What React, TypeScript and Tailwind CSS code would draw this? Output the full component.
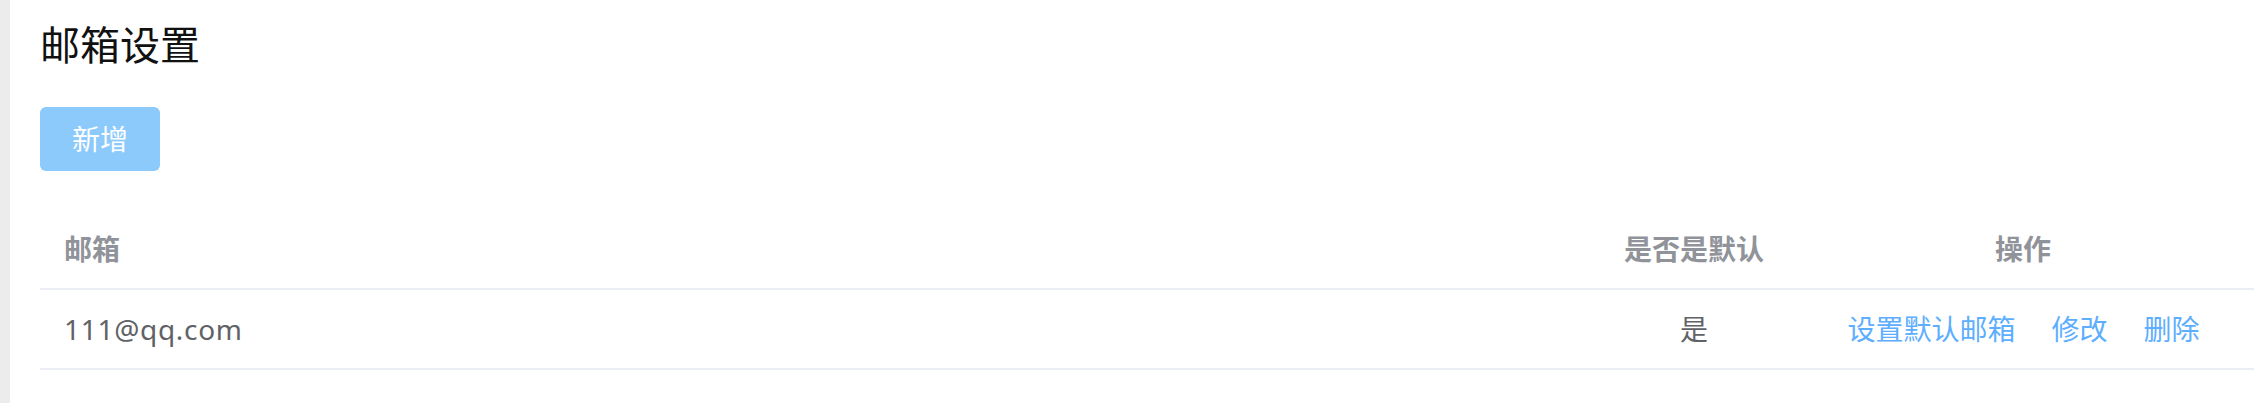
import React from 'react';

interface MailRow {
  email: string;
  isDefault: boolean;
}

const rows: MailRow[] = [{ email: '111@qq.com', isDefault: true }];

const App: React.FC = () => {
  return (
    <div className="flex w-full min-h-[403px] bg-white font-['Noto_Sans','Noto_Sans_CJK_SC',sans-serif]">
      <div className="w-[10px] shrink-0 bg-[#ececec]" />
      <main className="flex-1 pl-[30px] pr-[7px]">
        <h1 className="pt-[25px] h-[65px] text-[40px] leading-[40px] font-normal text-[#111]">邮箱设置</h1>

        <button className="mt-[42px] h-[64px] w-[120px] rounded-[6px] bg-[#8ccafb] text-[28px] leading-none text-white">
          新增
        </button>

        <div className="mt-[39px] text-[28px]">
          <div className="grid grid-cols-[1551px_206px_1fr] h-[80px] items-center border-b-2 border-[#ebeef5] font-bold text-[#909399]">
            <div className="pl-[24px]">邮箱</div>
            <div className="text-center">是否是默认</div>
            <div className="text-center pr-[5px]">操作</div>
          </div>
          {rows.map((row) => (
            <div
              key={row.email}
              className="grid grid-cols-[1551px_206px_1fr] h-[80px] items-center border-b-2 border-[#ebeef5] text-[#606266]"
            >
              <div className="pl-[24px] tracking-[0.7px]">{row.email}</div>
              <div className="text-center">{row.isDefault ? '是' : '否'}</div>
              <div className="flex justify-center gap-[36px] pr-[4px] text-[#5daeff]">
                <span className="cursor-pointer">设置默认邮箱</span>
                <span className="cursor-pointer">修改</span>
                <span className="cursor-pointer">删除</span>
              </div>
            </div>
          ))}
        </div>
      </main>
    </div>
  );
};

export default App;
